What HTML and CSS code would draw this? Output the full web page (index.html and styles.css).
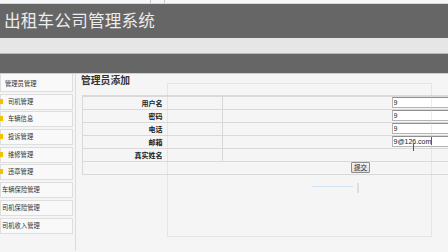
FILE: index.html
```html
<!DOCTYPE html>
<html lang="zh-CN">
<head>
    <meta charset="UTF-8">
    <meta name="viewport" content="width=device-width, initial-scale=1.0">
    <title>出租车公司管理系统</title>
    <link rel="stylesheet" href="styles.css">
</head>
<body>
    <div class="topbar"><span class="tab"></span></div>

    <div class="header">
        <h1>出租车公司管理系统</h1>
    </div>
    <div class="subbar"></div>
    <div class="navbar"></div>

    <div class="page">
        <ul class="sidebar">
            <li class="first">管理员管理</li>
            <li class="mark">司机管理</li>
            <li class="mark">车辆信息</li>
            <li class="mark">投诉管理</li>
            <li class="mark">维修管理</li>
            <li class="mark">违章管理</li>
            <li>车辆保险管理</li>
            <li>司机保险管理</li>
            <li>司机收入管理</li>
        </ul>

        <div class="main">
            <h2>管理员添加</h2>
            <form class="admin-form">
                <table>
                    <tr>
                        <th>用户名</th><td class="c2"></td><td class="c3"></td>
                        <td class="c4"><input type="text" value="9"></td>
                    </tr>
                    <tr>
                        <th>密码</th><td class="c2"></td><td class="c3"></td>
                        <td class="c4"><input type="text" value="9"></td>
                    </tr>
                    <tr>
                        <th>电话</th><td class="c2"></td><td class="c3"></td>
                        <td class="c4"><input type="text" value="9"></td>
                    </tr>
                    <tr>
                        <th>邮箱</th><td class="c2"></td><td class="c3"></td>
                        <td class="c4"><div class="fake-input">9@126.com<span class="caret"></span></div></td>
                    </tr>
                    <tr>
                        <th>真实姓名</th><td class="c2"></td><td class="c3"></td><td class="c4"></td>
                    </tr>
                    <tr>
                        <td colspan="4" class="submit-row"><button type="button" class="btn">提交</button></td>
                    </tr>
                </table>
            </form>
        </div>
    </div>

    <!-- faint overlay left by the screen recorder -->
    <div class="ghost-frame"></div>
    <div class="ghost-line"></div>
    <div class="ghost-bar"></div>
    <div class="ibeam"></div>
</body>
</html>
```

FILE: styles.css
```css
* {
    margin: 0;
    padding: 0;
    box-sizing: border-box;
}

body {
    width: 448px;
    height: 252px;
    overflow: hidden;
    background: #f5f5f5;
    color: #333;
    font-family: "Noto Sans CJK SC", "Liberation Sans", sans-serif;
    position: relative;
}

.topbar {
    height: 4px;
    background: #f6f7f9;
    border-bottom: 1px solid #d4dae4;
}

.topbar .tab {
    display: block;
    margin-left: 150px;
    width: 15px;
    height: 3px;
    border-left: 1px solid #c9c9c9;
    border-right: 1px solid #c9c9c9;
}

.header {
    height: 34px;
    background: #666;
    padding: 5px 0 0 4px;
}

.header h1 {
    font-size: 16.6px;
    font-weight: normal;
    color: #ececec;
    line-height: 22px;
    letter-spacing: 0.2px;
}

.subbar {
    height: 16px;
    background: #e6e6e6;
    border-bottom: 1px solid #b9b9b9;
}

.navbar {
    height: 20px;
    background: #666;
    border-bottom: 1px solid #cfcfcf;
}

.page {
    display: flex;
    height: 177px;
}

/* Sidebar */
.sidebar {
    list-style: none;
    width: 76px;
    border-right: 1px solid #dcdcdc;
    flex-shrink: 0;
}

.sidebar li {
    width: 73px;
    height: 16px;
    margin-bottom: 1.7px;
    border: 1px solid #dedede;
    background: #f9f9f9;
    font-size: 6.3px;
    line-height: 14px;
    color: #333;
    padding-left: 1px;
    position: relative;
}

.sidebar li.first {
    height: 18px;
    border-top: none;
    line-height: 19px;
    padding-left: 4px;
}

.sidebar li.mark {
    padding-left: 7px;
}

.sidebar li.mark::before {
    content: '';
    position: absolute;
    left: -1px;
    top: 4px;
    width: 3px;
    height: 5px;
    background: #f2c200;
}

/* Main content */
.main {
    flex: 1;
    overflow: hidden;
    padding-left: 5px;
}

.main h2 {
    font-size: 9.8px;
    font-weight: 600;
    color: #333;
    line-height: 12px;
}

.admin-form table {
    margin: 9px 0 0 1px;
    width: 556px;
    border-collapse: collapse;
    table-layout: fixed;
}

.admin-form th,
.admin-form td {
    height: 13px;
    border-top: 1px solid #d9d9d9;
    border-bottom: 1px solid #d9d9d9;
    padding: 0;
}

.admin-form tr:first-child th,
.admin-form tr:first-child td {
    border-top: 2px solid #d9d9d9;
}

.admin-form th {
    width: 85px;
    border-left: 1px solid #d9d9d9;
    text-align: right;
    padding-right: 5px;
    font-size: 7px;
    font-weight: bold;
    color: #222;
}

.admin-form .c2 {
    width: 55px;
    border-right: 1px solid #d6d6d6;
}

.admin-form .c3 {
    width: 169px;
}

.admin-form input,
.fake-input {
    display: block;
    width: 160px;
    height: 11px;
    border: 1px solid #b5b5b5;
    border-top-color: #8f8f8f;
    background: #fff;
    font-family: "Liberation Sans", sans-serif;
    font-size: 7px;
    line-height: 9px;
    color: #222;
    padding: 0 0 0 1px;
    outline: none;
}

.fake-input .caret {
    display: inline-block;
    width: 1px;
    height: 8px;
    background: #222;
    vertical-align: -1px;
}

.submit-row {
    text-align: center;
    height: 12px;
    border-left: 1px solid #d9d9d9;
}

.btn {
    width: 19px;
    height: 11px;
    font-family: "Noto Sans CJK SC", sans-serif;
    font-size: 6.5px;
    line-height: 9px;
    color: #222;
    background: linear-gradient(#f6f6f6, #dcdcdc);
    border: 1px solid #8d8d8d;
    border-radius: 1px;
    display: block;
    margin: 0 auto;
}

/* recorder overlay */
.ghost-frame {
    position: absolute;
    left: 167px;
    top: 83px;
    width: 265px;
    height: 154px;
    border: 1px solid rgba(200, 200, 200, 0.35);
    pointer-events: none;
}

.ghost-line {
    position: absolute;
    left: 312px;
    top: 186px;
    width: 41px;
    height: 1px;
    background: #d3e2f2;
}

.ghost-bar {
    position: absolute;
    left: 357px;
    top: 183px;
    width: 2px;
    height: 10px;
    background: #dedede;
}

.ibeam {
    position: absolute;
    left: 413px;
    top: 144px;
    width: 1px;
    height: 7px;
    background: #555;
}
```
